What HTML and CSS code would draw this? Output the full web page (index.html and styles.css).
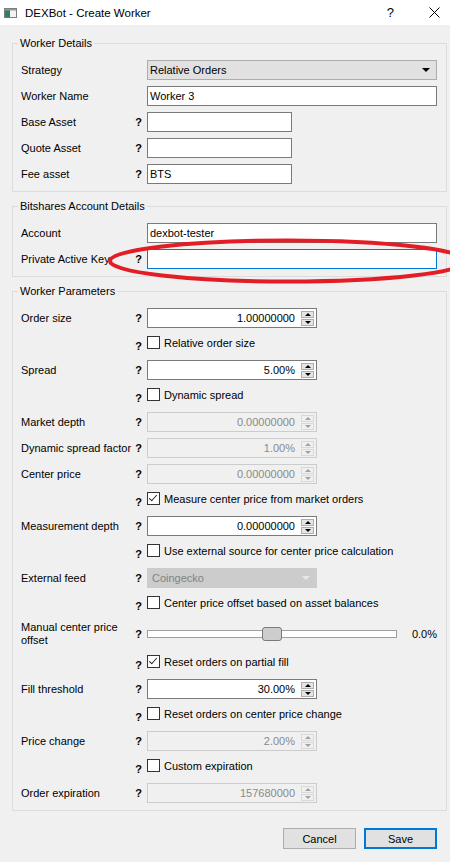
FILE: index.html
```html
<!DOCTYPE html>
<html lang="en">
<head>
  <meta charset="UTF-8" />
  <meta name="viewport" content="width=device-width, initial-scale=1.0"/>
  <title>DEXBot - Create Worker</title>
  <link rel="stylesheet" href="styles.css">
</head>
<body>

  <!-- Window title bar -->
  <div class="titlebar">
    <svg class="app-icon" width="13" height="10" viewBox="0 0 13 10">
      <rect x="0.5" y="0.5" width="12" height="9" fill="#f4f4f4" stroke="#7d7d7d"/>
      <rect x="1" y="1" width="5" height="8" fill="#2f7d6d"/>
      <rect x="1" y="1" width="11" height="1.5" fill="#9a9a9a"/>
    </svg>
    <span class="title">DEXBot - Create Worker</span>
    <span class="tb-help">?</span>
    <svg class="tb-close" width="11" height="11" viewBox="0 0 11 11">
      <path d="M0.5 0.5 L10.5 10.5 M10.5 0.5 L0.5 10.5" stroke="#000" stroke-width="1"/>
    </svg>
  </div>

  <div class="dialog">

    <!-- Worker Details -->
    <fieldset class="group">
      <legend>Worker Details</legend>
      <div class="rows">
        <div class="row">
          <span class="lbl">Strategy</span><span class="q"></span>
          <div class="combo wide"><span>Relative Orders</span><i class="caret"></i></div>
        </div>
        <div class="row">
          <span class="lbl">Worker Name</span><span class="q"></span>
          <div class="field wide">Worker 3</div>
        </div>
        <div class="row">
          <span class="lbl">Base Asset</span><span class="q">?</span>
          <div class="field short"></div>
        </div>
        <div class="row">
          <span class="lbl">Quote Asset</span><span class="q">?</span>
          <div class="field short"></div>
        </div>
        <div class="row">
          <span class="lbl">Fee asset</span><span class="q">?</span>
          <div class="field short">BTS</div>
        </div>
      </div>
    </fieldset>

    <!-- Bitshares Account Details -->
    <fieldset class="group">
      <legend>Bitshares Account Details</legend>
      <div class="rows">
        <div class="row">
          <span class="lbl">Account</span><span class="q"></span>
          <div class="field wide">dexbot-tester</div>
        </div>
        <div class="row">
          <span class="lbl">Private Active Key</span><span class="q">?</span>
          <div class="field wide focused"></div>
        </div>
      </div>
    </fieldset>

    <!-- Worker Parameters -->
    <fieldset class="group">
      <legend>Worker Parameters</legend>
      <div class="rows">
        <div class="row">
          <span class="lbl">Order size</span><span class="q">?</span>
          <div class="spin"><span class="val">1.00000000</span><span class="arrows"><i class="up"></i><i class="down"></i></span></div>
        </div>
        <div class="row check">
          <span class="lbl"></span><span class="q">?</span>
          <label class="cb"><span class="box"></span>Relative order size</label>
        </div>
        <div class="row">
          <span class="lbl">Spread</span><span class="q">?</span>
          <div class="spin"><span class="val">5.00%</span><span class="arrows"><i class="up"></i><i class="down"></i></span></div>
        </div>
        <div class="row check">
          <span class="lbl"></span><span class="q">?</span>
          <label class="cb"><span class="box"></span>Dynamic spread</label>
        </div>
        <div class="row">
          <span class="lbl">Market depth</span><span class="q">?</span>
          <div class="spin disabled"><span class="val">0.00000000</span><span class="arrows"><i class="up"></i><i class="down"></i></span></div>
        </div>
        <div class="row">
          <span class="lbl">Dynamic spread factor</span><span class="q">?</span>
          <div class="spin disabled"><span class="val">1.00%</span><span class="arrows"><i class="up"></i><i class="down"></i></span></div>
        </div>
        <div class="row">
          <span class="lbl">Center price</span><span class="q">?</span>
          <div class="spin disabled"><span class="val">0.00000000</span><span class="arrows"><i class="up"></i><i class="down"></i></span></div>
        </div>
        <div class="row check">
          <span class="lbl"></span><span class="q">?</span>
          <label class="cb"><span class="box checked"></span>Measure center price from market orders</label>
        </div>
        <div class="row">
          <span class="lbl">Measurement depth</span><span class="q">?</span>
          <div class="spin"><span class="val">0.00000000</span><span class="arrows"><i class="up"></i><i class="down"></i></span></div>
        </div>
        <div class="row check">
          <span class="lbl"></span><span class="q">?</span>
          <label class="cb"><span class="box"></span>Use external source for center price calculation</label>
        </div>
        <div class="row">
          <span class="lbl">External feed</span><span class="q">?</span>
          <div class="combo mid disabled"><span>Coingecko</span><i class="caret"></i></div>
        </div>
        <div class="row check">
          <span class="lbl"></span><span class="q">?</span>
          <label class="cb"><span class="box"></span>Center price offset based on asset balances</label>
        </div>
        <div class="row tall">
          <span class="lbl">Manual center price offset</span><span class="q">?</span>
          <div class="slider"><span class="handle"></span></div>
          <span class="pct">0.0%</span>
        </div>
        <div class="row check">
          <span class="lbl"></span><span class="q">?</span>
          <label class="cb"><span class="box checked"></span>Reset orders on partial fill</label>
        </div>
        <div class="row">
          <span class="lbl">Fill threshold</span><span class="q">?</span>
          <div class="spin"><span class="val">30.00%</span><span class="arrows"><i class="up"></i><i class="down"></i></span></div>
        </div>
        <div class="row check">
          <span class="lbl"></span><span class="q">?</span>
          <label class="cb"><span class="box"></span>Reset orders on center price change</label>
        </div>
        <div class="row">
          <span class="lbl">Price change</span><span class="q">?</span>
          <div class="spin disabled"><span class="val">2.00%</span><span class="arrows"><i class="up"></i><i class="down"></i></span></div>
        </div>
        <div class="row check">
          <span class="lbl"></span><span class="q">?</span>
          <label class="cb"><span class="box"></span>Custom expiration</label>
        </div>
        <div class="row">
          <span class="lbl">Order expiration</span><span class="q">?</span>
          <div class="spin disabled"><span class="val">157680000</span><span class="arrows"><i class="up"></i><i class="down"></i></span></div>
        </div>
      </div>
    </fieldset>

    <div class="buttons">
      <button class="btn">Cancel</button>
      <button class="btn default">Save</button>
    </div>
  </div>

  <!-- red annotation drawn over the key field -->
  <svg class="annotation" width="450" height="862" viewBox="0 0 450 862">
    <ellipse cx="288" cy="261" rx="178" ry="20.5" fill="none" stroke="#e21d25" stroke-width="4"/>
  </svg>

</body>
</html>
```

FILE: styles.css
```css
body {
  margin: 0;
  width: 450px;
  height: 862px;
  overflow: hidden;
  position: relative;
  background: #f0f0f0;
  font-family: "Liberation Sans", Arial, sans-serif;
  font-size: 11px;
  color: #000;
}

/* title bar */
.titlebar {
  height: 25px;
  background: #fff;
  display: flex;
  align-items: center;
}
.app-icon {
  margin-left: 4px;
  margin-top: 1px;
}
.title {
  margin-left: 8px;
  font-size: 11.5px;
}
.tb-help {
  margin-left: auto;
  font-size: 13px;
  margin-right: 35px;
}
.tb-close {
  margin-right: 10px;
}

/* dialog */
.dialog {
  padding: 11px 3px 0 12px;
}
.group {
  border: 1px solid #dcdcdc;
  margin: 0 0 7px 0;
  padding: 10px 9px 7px 8px;
  min-width: 0;
}
.group legend {
  padding: 0 2px;
  margin-left: -3px;
  line-height: 14px;
}
.rows {
  display: flex;
  flex-direction: column;
  gap: 6px;
}
.row {
  display: flex;
  align-items: center;
  height: 20px;
}
.row.tall {
  height: 27px;
}
.lbl {
  width: 112px;
  flex: none;
  line-height: 13px;
}
.q {
  width: 11px;
  flex: none;
  margin-right: 3px;
  text-align: center;
  font-weight: bold;
}
.check .q {
  margin-top: 3px;
}

/* inputs */
.field {
  box-sizing: border-box;
  height: 20px;
  border: 1px solid #7a7a7a;
  background: #fff;
  padding-left: 2px;
  line-height: 18px;
}
.field.focused {
  border-color: #0078d7;
}
.wide {
  flex: 1;
}
.short {
  width: 145px;
}
.combo {
  box-sizing: border-box;
  height: 20px;
  border: 1px solid #adadad;
  background: #e1e1e1;
  display: flex;
  align-items: center;
  justify-content: space-between;
  padding: 0 6px 0 2px;
}
.combo.mid {
  width: 170px;
  padding-left: 4px;
}
.combo.disabled {
  background: #cccccc;
  border-color: #cccccc;
  color: #838383;
}
.caret {
  width: 0;
  height: 0;
  border-left: 4px solid transparent;
  border-right: 4px solid transparent;
  border-top: 4px solid #000;
}
.combo.disabled .caret {
  border-top-color: #e8e8e8;
}

/* spin boxes */
.spin {
  box-sizing: border-box;
  width: 170px;
  height: 20px;
  border: 1px solid #7a7a7a;
  background: #fff;
  display: flex;
  align-items: center;
}
.spin .val {
  flex: 1;
  text-align: right;
  padding-right: 6px;
}
.spin .arrows {
  display: flex;
  flex-direction: column;
  gap: 1px;
  width: 13px;
  margin-right: 2px;
}
.spin .arrows i {
  box-sizing: border-box;
  height: 7px;
  border: 1px solid #adadad;
  background: #e5e5e5;
  display: flex;
  align-items: center;
  justify-content: center;
}
.spin .arrows i::after {
  content: "";
  width: 0;
  height: 0;
  border-left: 3px solid transparent;
  border-right: 3px solid transparent;
}
.spin .up::after {
  border-bottom: 3px solid #000;
}
.spin .down::after {
  border-top: 3px solid #000;
}
.spin.disabled {
  background: #f0f0f0;
  border-color: #cccccc;
  color: #8a8a8a;
}
.spin.disabled .arrows i {
  border-color: #d9d9d9;
  background: #f0f0f0;
}
.spin.disabled .up::after {
  border-bottom-color: #a0a0a0;
}
.spin.disabled .down::after {
  border-top-color: #a0a0a0;
}

/* check boxes */
.cb {
  display: flex;
  align-items: center;
  gap: 4px;
  margin-bottom: 3px;
}
.box {
  box-sizing: border-box;
  width: 13px;
  height: 13px;
  border: 1px solid #333;
  background: #fff;
  position: relative;
}
.box.checked::after {
  content: "";
  position: absolute;
  left: 3px;
  top: 0px;
  width: 3px;
  height: 7px;
  border-right: 1.2px solid #222;
  border-bottom: 1.2px solid #222;
  transform: rotate(42deg);
}

/* slider */
.slider {
  box-sizing: border-box;
  width: 250px;
  height: 8px;
  border: 1px solid #a0a0a0;
  background: #fff;
  position: relative;
}
.handle {
  box-sizing: border-box;
  position: absolute;
  left: 114px;
  top: -4px;
  width: 20px;
  height: 14px;
  border: 1px solid #7a7a7a;
  border-radius: 3px;
  background: #cdcdcd;
}
.pct {
  flex: 1;
  text-align: right;
}

/* buttons */
.buttons {
  display: flex;
  justify-content: flex-end;
  gap: 8px;
  margin-top: 17px;
  padding-right: 10px;
}
.btn {
  box-sizing: border-box;
  width: 73px;
  height: 21px;
  border: 1px solid #adadad;
  background: #e1e1e1;
  font-family: inherit;
  font-size: 11px;
  color: #000;
  padding: 0;
}
.btn.default {
  border: 2px solid #0078d7;
}

.annotation {
  position: absolute;
  left: 0;
  top: 0;
  pointer-events: none;
}
```
